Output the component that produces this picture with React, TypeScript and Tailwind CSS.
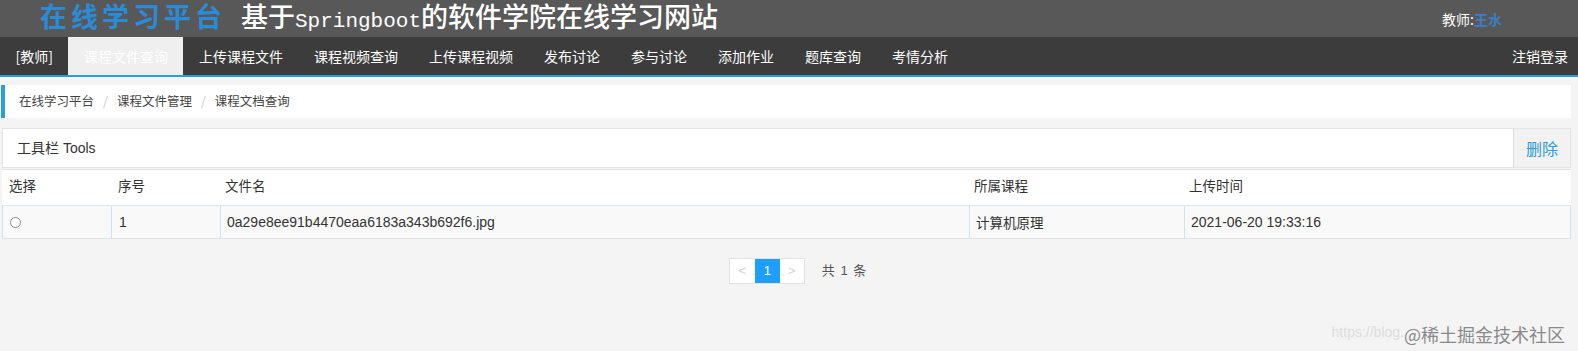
import React from "react";

const sans = "font-['Liberation_Sans','Noto_Sans_CJK_SC',sans-serif]";

export default function App() {
  const navItems = ["上传课程文件", "课程视频查询", "上传课程视频", "发布讨论", "参与讨论", "添加作业", "题库查询", "考情分析"];
  return (
    <div className={`relative min-h-[351px] w-full bg-[#f4f4f4] ${sans} text-[#333]`}>
      {/* header */}
      <div className="h-[37px] bg-[#585858] flex items-center font-['Liberation_Serif','Noto_Sans_CJK_SC',serif]">
        <div className="ml-[40px] text-[27px] leading-none font-semibold tracking-[4px] text-[#2a8bd6]">在线学习平台</div>
        <div className="ml-[15px] text-[27px] leading-none font-medium text-white">
          基于<span className="font-['Liberation_Mono',monospace] text-[21px] font-normal">Springboot</span>的软件学院在线学习网站
        </div>
        <div className="ml-auto mr-[76px] mt-[1px] text-[14px] leading-none text-white font-['Noto_Sans_CJK_SC',serif]">
          教师:<span className="text-[#3b7fc4] font-semibold">王水</span>
        </div>
      </div>
      {/* nav */}
      <div className="h-[40px] bg-[#3c3c3c] border-b-2 border-[#2b9ed8] flex items-stretch text-[14px] text-white font-['Noto_Sans_CJK_SC',sans-serif]">
        <div className="px-[15.5px] flex items-center">[教师]</div>
        <div className="px-[15.5px] flex items-center bg-[#efefef] text-white">课程文件查询</div>
        {navItems.map((t) => (
          <div key={t} className="px-[15.5px] flex items-center">{t}</div>
        ))}
        <div className="ml-auto pr-[10px] flex items-center">注销登录</div>
      </div>
      {/* content */}
      <div className="pl-[1px] pr-[7px] pt-[8px]">
        <div className="h-[33px] bg-white border-l-4 border-[#2b9ed8] flex items-center pl-[14px] text-[12.5px] text-[#444] font-['Noto_Sans_CJK_SC',sans-serif]">
          <span>在线学习平台</span>
          <span className="px-[9px] text-[#c8c8c8]">/</span>
          <span>课程文件管理</span>
          <span className="px-[9px] text-[#c8c8c8]">/</span>
          <span>课程文档查询</span>
        </div>

        <div className="mt-[10px] ml-[1px]">
          <div className="h-[40px] bg-white border border-[#e4e4e4] flex items-center justify-between">
            <span className="pl-[14px] text-[14px] text-[#333]">工具栏 Tools</span>
            <div className="h-full w-[57px] bg-[#f2f2f2] border-l border-[#dcdcdc] flex items-center justify-center text-[16px] text-[#2a9bd8] font-['Noto_Sans_CJK_SC',sans-serif]">删除</div>
          </div>
          <div className="mt-[1px] border-t border-[#e4e4e4] grid grid-cols-[108px_109px_749px_215px_1fr] h-[36px] bg-white text-[13.5px] items-center">
            <div className="pl-[7px]">选择</div>
            <div className="pl-[8px]">序号</div>
            <div className="pl-[6px]">文件名</div>
            <div className="pl-[6px]">所属课程</div>
            <div className="pl-[6px]">上传时间</div>
          </div>
          <div className="grid grid-cols-[108px_109px_749px_215px_1fr] h-[34px] bg-[#f9f9f9] text-[14px] border border-t-[#dde6ec] border-b-[#e2e2e2] border-x-[#cfe3ef]">
            <div className="flex items-center pl-[7px]">
              <span className="inline-block w-[11px] h-[11px] rounded-full border border-[#888] bg-white"></span>
            </div>
            <div className="flex items-center pl-[7px] border-l border-[#cfe3ef]">1</div>
            <div className="flex items-center pl-[6px] border-l border-[#cfe3ef]">0a29e8ee91b4470eaa6183a343b692f6.jpg</div>
            <div className="flex items-center pl-[6px] border-l border-[#cfe3ef] font-['Noto_Sans_CJK_SC',sans-serif] text-[13.5px]">计算机原理</div>
            <div className="flex items-center pl-[6px] border-l border-[#cfe3ef]">2021-06-20 19:33:16</div>
          </div>
        </div>

        <div className="mt-[19px] flex items-center justify-center pl-[24px]">
          <div className="flex h-[26px] border border-[#e2e2e2] bg-white text-[13px]">
            <div className="w-[25px] flex items-center justify-center text-[#d2d2d2]">&lt;</div>
            <div className="w-[25px] flex items-center justify-center bg-[#1e9fff] text-white">1</div>
            <div className="w-[24px] flex items-center justify-center text-[#d2d2d2]">&gt;</div>
          </div>
          <div className="ml-[17px] text-[13px] text-[#555] tracking-[1px]">共 1 条</div>
        </div>
      </div>

      {/* watermark */}
      <div className="absolute right-[13px] bottom-[8px] flex items-end">
        <span className="text-[14px] text-[#dcdcdc]">https://blog.</span>
        <span className="text-[18px] leading-none text-[#8a8a8a] font-['Noto_Sans_CJK_SC',serif]">@稀土掘金技术社区</span>
      </div>
    </div>
  );
}
